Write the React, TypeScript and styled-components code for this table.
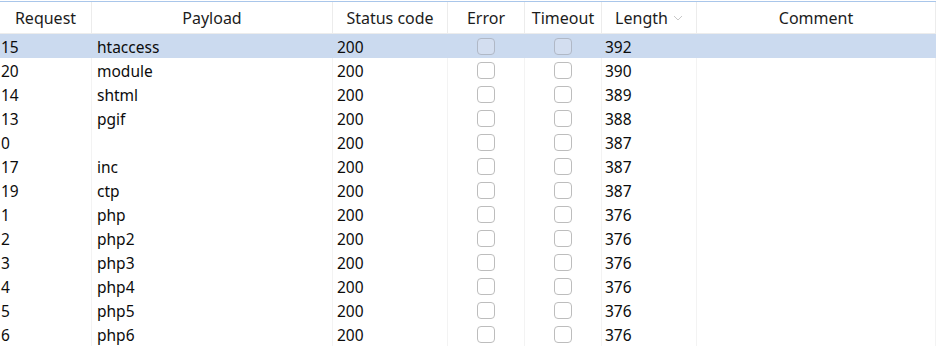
import React from 'react';
import styled, { createGlobalStyle } from 'styled-components';

const GlobalStyle = createGlobalStyle`
  html, body {
    margin: 0;
    padding: 0;
    background: #ffffff;
  }
`;

const COLUMNS = '92px 241px 115px 77px 77px 95px 1fr';

const Table = styled.div`
  width: 936px;
  height: 350px;
  overflow: hidden;
  padding-top: 1px;
  font-family: "Noto Sans", "Open Sans", sans-serif;
  font-size: 15.5px;
  color: #0c0c0c;
  background: #fff;
`;

const HeaderRow = styled.div`
  display: grid;
  grid-template-columns: ${COLUMNS};
  height: 31px;
  border-top: 1px solid #a9c6ea;
  border-bottom: 1px solid #ececec;
`;

const HeaderCell = styled.div`
  display: flex;
  align-items: center;
  justify-content: center;
  gap: 5px;
  padding-top: 1px;
  border-right: 1px solid #ececec;
  font-size: 16px;
  color: #1c1c1c;
  white-space: nowrap;
`;

const Row = styled.div<{ $selected?: boolean }>`
  display: grid;
  grid-template-columns: ${COLUMNS};
  height: 24px;
  background: ${(p) => (p.$selected ? '#cbdaef' : '#ffffff')};
`;

const Cell = styled.div<{ $pad?: number; $center?: boolean; $selected?: boolean }>`
  display: flex;
  align-items: center;
  justify-content: ${(p) => (p.$center ? 'center' : 'flex-start')};
  padding-left: ${(p) => p.$pad ?? 4}px;
  padding-top: ${(p) => (p.$center ? 0 : 2)}px;
  border-right: 1px solid ${(p) => (p.$selected ? 'transparent' : '#f3f3f3')};
  white-space: nowrap;
  overflow: hidden;
`;

const Check = styled.span<{ $selected?: boolean }>`
  display: inline-block;
  width: 18px;
  height: 17px;
  box-sizing: border-box;
  border: 1px solid ${(p) => (p.$selected ? '#b0b8c6' : '#bdbdbd')};
  border-radius: 4px;
  background: ${(p) => (p.$selected ? '#d3def0' : '#ffffff')};
`;

const SortArrow = () => (
  <svg width="10" height="6" viewBox="0 0 10 6">
    <path d="M1 1 L5 5 L9 1" fill="none" stroke="#c8c8c8" strokeWidth="1" />
  </svg>
);

type Result = { id: number; payload: string; status: number; length: number };

const results: Result[] = [
  { id: 15, payload: 'htaccess', status: 200, length: 392 },
  { id: 20, payload: 'module', status: 200, length: 390 },
  { id: 14, payload: 'shtml', status: 200, length: 389 },
  { id: 13, payload: 'pgif', status: 200, length: 388 },
  { id: 0, payload: '', status: 200, length: 387 },
  { id: 17, payload: 'inc', status: 200, length: 387 },
  { id: 19, payload: 'ctp', status: 200, length: 387 },
  { id: 1, payload: 'php', status: 200, length: 376 },
  { id: 2, payload: 'php2', status: 200, length: 376 },
  { id: 3, payload: 'php3', status: 200, length: 376 },
  { id: 4, payload: 'php4', status: 200, length: 376 },
  { id: 5, payload: 'php5', status: 200, length: 376 },
  { id: 6, payload: 'php6', status: 200, length: 376 },
];

export default function App() {
  return (
    <>
      <GlobalStyle />
      <Table>
        <HeaderRow>
          <HeaderCell>Request</HeaderCell>
          <HeaderCell>Payload</HeaderCell>
          <HeaderCell>Status code</HeaderCell>
          <HeaderCell>Error</HeaderCell>
          <HeaderCell>Timeout</HeaderCell>
          <HeaderCell>
            Length
            <SortArrow />
          </HeaderCell>
          <HeaderCell>Comment</HeaderCell>
        </HeaderRow>
        {results.map((r, i) => {
          const sel = i === 0;
          return (
            <Row key={r.id} $selected={sel}>
              <Cell $pad={1} $selected={sel}>{r.id}</Cell>
              <Cell $pad={5} $selected={sel}>{r.payload}</Cell>
              <Cell $selected={sel}>{r.status}</Cell>
              <Cell $center $pad={0} $selected={sel}>
                <Check $selected={sel} />
              </Cell>
              <Cell $center $pad={0} $selected={sel}>
                <Check $selected={sel} />
              </Cell>
              <Cell $pad={3} $selected={sel}>{r.length}</Cell>
              <Cell $selected={sel} />
            </Row>
          );
        })}
      </Table>
    </>
  );
}
